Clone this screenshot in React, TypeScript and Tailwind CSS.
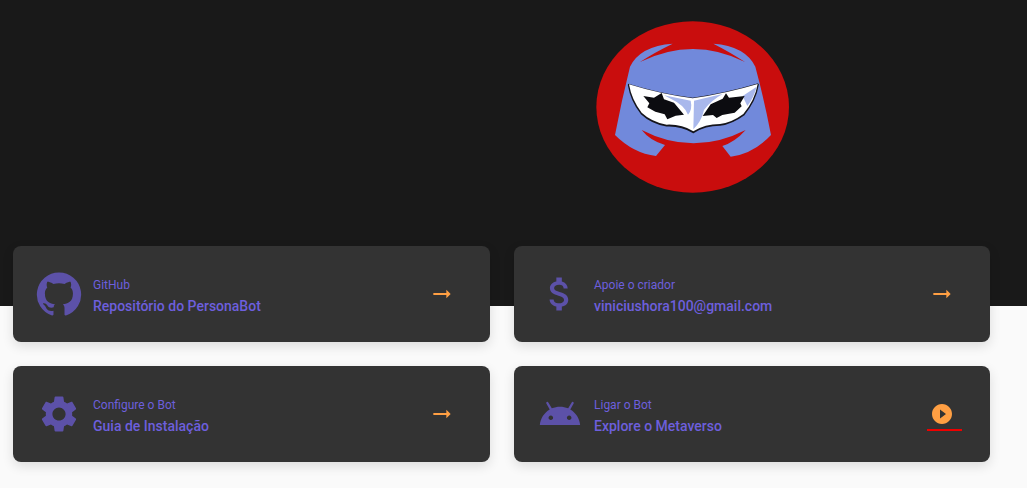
const GITHUB = "M12 1.27a11 11 0 00-3.48 21.46c.55.09.73-.28.73-.55v-1.84c-3.03.64-3.67-1.46-3.67-1.46-.55-1.29-1.28-1.65-1.28-1.65-.92-.65.1-.65.1-.65 1.1 0 1.73 1.1 1.73 1.1.92 1.65 2.57 1.2 3.21.92a2 2 0 01.64-1.47c-2.47-.27-5.04-1.19-5.04-5.5 0-1.1.46-2.1 1.2-2.84a3.76 3.76 0 010-2.93s.91-.28 3.11 1.1c1.8-.49 3.7-.49 5.5 0 2.1-1.38 3.02-1.1 3.02-1.1a3.76 3.76 0 010 2.93c.83.74 1.2 1.74 1.2 2.94 0 4.21-2.57 5.13-5.04 5.4.45.37.82.92.82 2.02v3.03c0 .27.1.64.73.55A11 11 0 0012 1.27";
const MONEY = "M11.8 10.9c-2.27-.59-3-1.2-3-2.15 0-1.09 1.01-1.85 2.7-1.85 1.78 0 2.44.85 2.5 2.1h2.21c-.07-1.72-1.12-3.3-3.21-3.81V3h-3v2.16c-1.94.42-3.5 1.68-3.5 3.61 0 2.31 1.91 3.46 4.7 4.13 2.5.6 3 1.48 3 2.41 0 .69-.49 1.79-2.7 1.79-2.06 0-2.87-.92-2.98-2.1h-2.2c.12 2.19 1.76 3.42 3.68 3.83V21h3v-2.15c1.95-.37 3.5-1.5 3.5-3.55 0-2.84-2.43-3.81-4.7-4.4z";
const SETTINGS = "M19.14 12.94c.04-.3.06-.61.06-.94 0-.32-.02-.64-.07-.94l2.03-1.58c.18-.14.23-.41.12-.61l-1.92-3.32c-.12-.22-.37-.29-.59-.22l-2.39.96c-.5-.38-1.03-.7-1.62-.94l-.36-2.54c-.04-.24-.24-.41-.48-.41h-3.84c-.24 0-.43.17-.47.41l-.36 2.54c-.59.24-1.13.57-1.62.94l-2.39-.96c-.22-.08-.47 0-.59.22L2.74 8.87c-.12.21-.08.47.12.61l2.03 1.58c-.05.3-.09.63-.09.94s.02.64.07.94l-2.03 1.58c-.18.14-.23.41-.12.61l1.92 3.32c.12.22.37.29.59.22l2.39-.96c.5.38 1.03.7 1.62.94l.36 2.54c.05.24.24.41.48.41h3.84c.24 0 .44-.17.47-.41l.36-2.54c.59-.24 1.13-.56 1.62-.94l2.39.96c.22.08.47 0 .59-.22l1.92-3.32c.12-.22.07-.47-.12-.61l-2.01-1.58zM12 15.6c-1.98 0-3.6-1.62-3.6-3.6s1.62-3.6 3.6-3.6 3.6 1.62 3.6 3.6-1.62 3.6-3.6 3.6z";
const ANDROID = "M17.6 9.48l1.84-3.18c.16-.31.04-.69-.26-.85-.29-.15-.65-.06-.83.22l-1.88 3.24c-2.86-1.21-6.08-1.21-8.94 0L5.65 5.67c-.19-.29-.58-.38-.87-.2-.28.18-.37.54-.22.83L6.4 9.48C3.3 11.25 1.28 14.44 1 18h22c-.28-3.56-2.3-6.75-5.4-8.52zM7 15.25c-.69 0-1.25-.56-1.25-1.25s.56-1.25 1.25-1.25 1.25.56 1.25 1.25-.56 1.25-1.25 1.25zm10 0c-.69 0-1.25-.56-1.25-1.25s.56-1.25 1.25-1.25 1.25.56 1.25 1.25-.56 1.25-1.25 1.25z";
const ARROW = "M16.01 11H4v2h12.01v3L20 12l-3.99-4z";
const PLAY = "M12 2C6.48 2 2 6.48 2 12s4.48 10 10 10 10-4.48 10-10S17.52 2 12 2zm-2 14.5v-9l6 4.5-6 4.5z";

const cards = [
  { icon: GITHUB, size: "w-12 h-12", label: "GitHub", title: "Repositório do PersonaBot" },
  { icon: MONEY, size: "w-11 h-11", label: "Apoie o criador", title: "viniciushora100@gmail.com" },
  { icon: SETTINGS, size: "w-11 h-11", label: "Configure o Bot", title: "Guia de Instalação" },
  { icon: ANDROID, size: "w-11 h-11", label: "Ligar o Bot", title: "Explore o Metaverso", play: true },
];

const MASK_OUTLINE =
  "M147 223 Q240 252 338 265 Q440 250 533 222 Q525 270 490 312 Q455 338 420 342 Q375 342 340 364 Q305 342 260 344 Q215 336 185 308 Q155 270 147 223 Z";

function Logo() {
  return (
    <svg width="225" height="195" viewBox="0 0 675 585">
      <ellipse cx="338" cy="291" rx="289" ry="257" fill="#c90d0d" />
      <path
        d="M150 170 Q180 108 278 101 Q222 128 180 156 Q340 78 495 156 Q453 128 400 101 Q496 108 526 170 Q553 270 573 375 Q520 432 452 440 L427 408 Q465 396 497 360 Q340 440 185 360 Q210 392 255 405 L228 438 Q160 430 105 375 Q125 270 150 170 Z"
        fill="#7189db"
      />
      <path d={MASK_OUTLINE} fill="#15151c" stroke="#15151c" strokeWidth="7" strokeLinejoin="round" transform="translate(0 2)" />
      <path d={MASK_OUTLINE} fill="#ffffff" />
      <path d="M340 358 L342 272 Q385 262 428 252 Q392 272 372 300 Q364 335 340 358 Z" fill="#a9b8ec" />
      <path d="M252 256 L332 272 Q338 298 324 314 Q312 285 275 268 Z" fill="#a9b8ec" />
      <path d="M488 258 L530 230 Q522 262 502 288 Z" fill="#a9b8ec" />
      <path
        d="M190 258 L222 263 L245 249 L252 268 L282 278 L312 314 L287 317 L262 328 L254 313 L226 305 L202 292 L208 280 Z"
        fill="#0c0c10"
      />
      <path
        d="M368 318 L392 283 L428 266 L438 250 L447 263 L494 258 L481 280 L485 289 L464 308 L427 315 L410 324 L399 315 Z"
        fill="#0c0c10"
      />
    </svg>
  );
}

function Icon({ d, className }: { d: string; className: string }) {
  return (
    <svg viewBox="0 0 24 24" fill="currentColor" className={className}>
      <path d={d} />
    </svg>
  );
}

export default function App() {
  return (
    <div className="min-h-[488px] bg-[#fafafa] font-['Roboto',sans-serif] overflow-hidden">
      <div className="h-[306px] bg-[#191919] pt-[10px] pl-[580px]">
        <Logo />
      </div>
      <div className="grid grid-cols-[477px_476px] gap-6 ml-[13px] -mt-[60px]">
        {cards.map((card) => (
          <div
            key={card.label}
            className="flex items-center h-24 pl-[22px] pr-[30px] rounded-lg bg-[#333333] shadow-[0_4px_12px_rgba(0,0,0,0.12)]"
          >
            <div className="flex items-center justify-center w-12 h-12 text-[#5c51a8]">
              <Icon d={card.icon} className={card.size} />
            </div>
            <div className="flex-1 ml-[10px] pt-1 text-[#6d5fdd]">
              <p className="text-xs leading-[18px]">{card.label}</p>
              <p className="mt-[1px] text-sm leading-[22px] font-medium">{card.title}</p>
            </div>
            <div className="relative flex items-center justify-center w-9 h-9 text-[#ff9f43]">
              {card.play ? (
                <>
                  <Icon d={PLAY} className="w-6 h-6" />
                  <span className="absolute left-[3px] bottom-[1px] w-[35px] h-[2px] bg-[#ee0000]" />
                </>
              ) : (
                <Icon d={ARROW} className="w-[26px] h-[26px]" />
              )}
            </div>
          </div>
        ))}
      </div>
    </div>
  );
}
